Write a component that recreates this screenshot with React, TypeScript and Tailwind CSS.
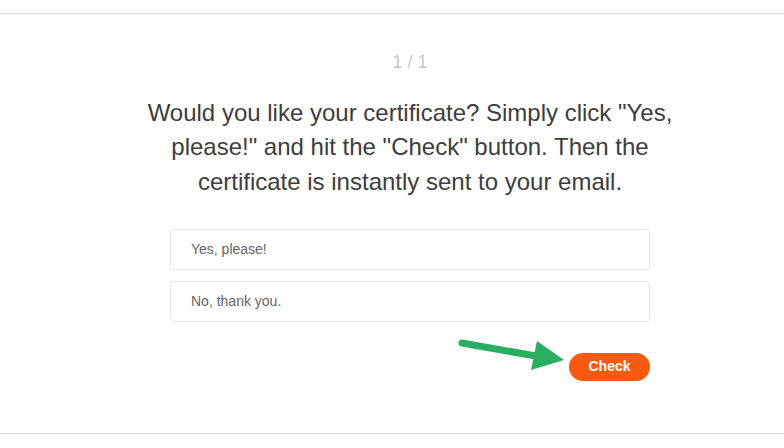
import React from "react";

export default function App() {
  return (
    <div className="w-[784px] h-[448px] bg-white overflow-hidden" style={{ fontFamily: '"Liberation Sans", Arial, sans-serif' }}>
      <div className="mt-[13px] h-[421px] border-t border-b border-[#dcdcdc] pl-[36px]">
        <div className="flex flex-col items-center">
          <div className="mt-[38px] text-[18px] leading-[21px] text-[#c8c8c8]">1 / 1</div>
          <h1 className="mt-[23px] w-[560px] text-center text-[24px] leading-[34.3px] text-[#3d3d3d] font-normal">
            Would you like your certificate? Simply click "Yes, please!" and hit the "Check" button. Then the certificate is instantly sent to your email.
          </h1>
          <div className="mt-[30px] w-[480px] flex flex-col gap-[11px]">
            <div className="h-[41px] border border-[#e6e6e6] rounded-[4px] flex items-center pl-[20px] text-[14px] text-[#666]">Yes, please!</div>
            <div className="h-[41px] border border-[#e6e6e6] rounded-[4px] flex items-center pl-[20px] text-[14px] text-[#666]">No, thank you.</div>
          </div>
          <div className="mt-[31px] w-[480px] flex justify-end relative">
            <svg className="absolute left-[284px] top-[-16px]" width="116" height="40" viewBox="0 0 116 40">
              <line x1="8" y1="6" x2="82" y2="19" stroke="#27ae60" strokeWidth="7" strokeLinecap="round" />
              <polygon points="83,4 77,33 110,23" fill="#27ae60" />
            </svg>
            <button className="h-[28px] w-[81px] rounded-full bg-[#fa5a0f] text-white text-[14px] font-bold">Check</button>
          </div>
        </div>
      </div>
    </div>
  );
}
